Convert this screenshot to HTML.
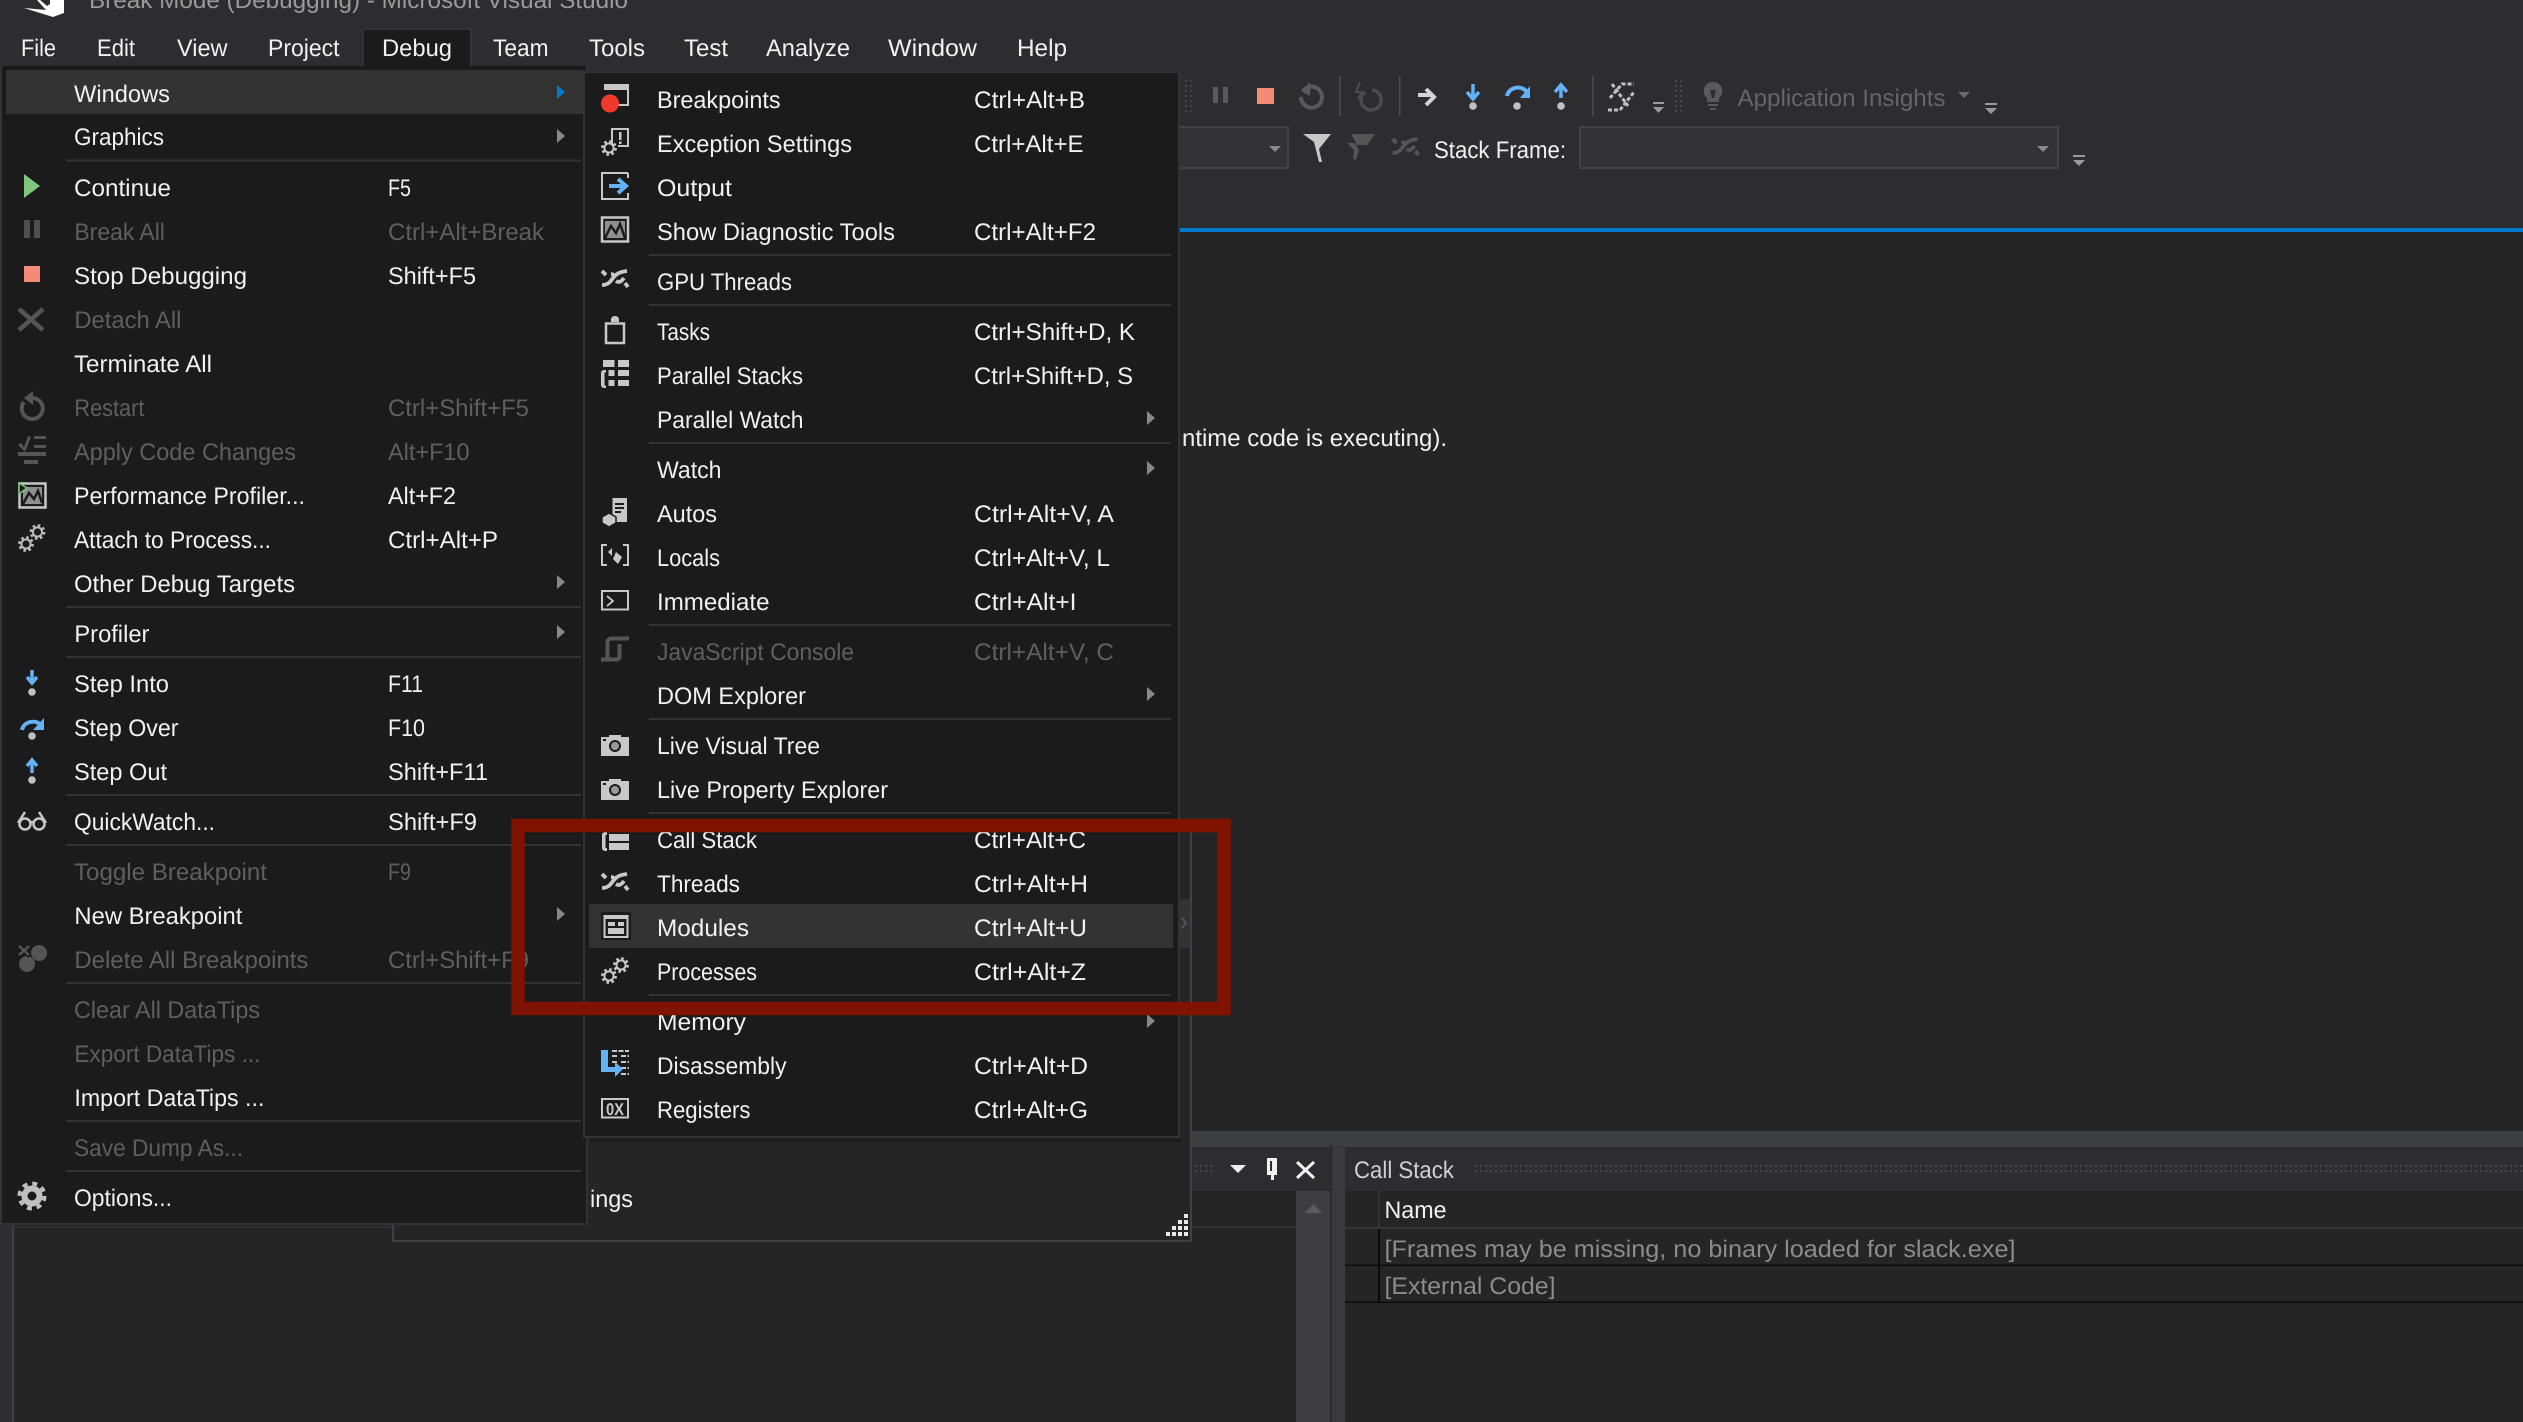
<!DOCTYPE html>
<html lang="en"><head><meta charset="utf-8"><title>Break Mode (Debugging) - Microsoft Visual Studio</title>
<style>
html,body{margin:0;padding:0;background:#252526;overflow:hidden}
svg{display:block}
text{font-family:"Liberation Sans",sans-serif;font-size:24px;fill:#f1f1f1;text-rendering:geometricPrecision}
.d{fill:#5f5f5f}
.g{fill:#8c8c8c}
</style></head><body>
<svg xmlns="http://www.w3.org/2000/svg" width="2523" height="1422" viewBox="0 0 2523 1422">
<defs>
<pattern id="grip" width="5" height="5" patternUnits="userSpaceOnUse"><rect width="2" height="2" fill="#48484c"/></pattern>
<symbol id="threads" viewBox="0 0 28 17" overflow="visible"><g fill="none" stroke-linecap="butt" stroke-width="3.800">
<path d="M1 15 C7 15 9 12 12 8 S18 2 26 1"/><path d="M10 4 C12 4 13 5 14 6 M15 11 C18 13 20 12 23 8 M1 1 l4 4 M24 13 l3 4"/></g></symbol>
<symbol id="gear" viewBox="-9 -9 18 18" overflow="visible"><g fill="none"><circle r="4.6" stroke-width="2"/><circle r="6.6" stroke-width="2.6" stroke-dasharray="2.6 2.58"/></g></symbol>
<symbol id="stepdot" viewBox="0 0 8 8"><circle cx="4" cy="4" r="3.8" fill="#c0c0c0"/></symbol>
</defs>

<!-- chrome -->
<rect width="2523" height="1422" fill="#252526"/>
<rect width="2523" height="228" fill="#2d2d30"/>
<rect x="0" y="228" width="2523" height="4" fill="#007acc"/>
<rect x="0" y="232" width="12" height="1190" fill="#2d2d30"/>
<rect x="12" y="232" width="2" height="1190" fill="#3f3f46"/>

<!-- logo + title -->
<path d="M24 8 L53 17 L64 13 L64 0 L50 0 L50 4 L47 6 L40 0 L37 0 L46 10 Z" fill="#fff"/>
<text x="89" y="8" textLength="539" lengthAdjust="spacingAndGlyphs" style="fill:#9a9a9a">Break Mode (Debugging) - Microsoft Visual Studio</text>

<!-- menu bar -->
<rect x="363" y="29" width="108" height="41" fill="#1b1b1c"/>
<path d="M363 70V29H471V66" fill="none" stroke="#333337" stroke-width="2"/>
<g>
<text x="21" y="56" textLength="35" lengthAdjust="spacingAndGlyphs">File</text>
<text x="97" y="56" textLength="38" lengthAdjust="spacingAndGlyphs">Edit</text>
<text x="177" y="56" textLength="50.5" lengthAdjust="spacingAndGlyphs">View</text>
<text x="268" y="56" textLength="71.5" lengthAdjust="spacingAndGlyphs">Project</text>
<text x="382" y="56" textLength="70" lengthAdjust="spacingAndGlyphs">Debug</text>
<text x="493" y="56" textLength="55.5" lengthAdjust="spacingAndGlyphs">Team</text>
<text x="589" y="56" textLength="56" lengthAdjust="spacingAndGlyphs">Tools</text>
<text x="684" y="56" textLength="44" lengthAdjust="spacingAndGlyphs">Test</text>
<text x="766" y="56" textLength="84" lengthAdjust="spacingAndGlyphs">Analyze</text>
<text x="888" y="56" textLength="89" lengthAdjust="spacingAndGlyphs">Window</text>
<text x="1017" y="56" textLength="50" lengthAdjust="spacingAndGlyphs">Help</text>
</g>

<!-- toolbar row 1 -->
<rect x="1184" y="78" width="10" height="34" fill="url(#grip)"/>
<path d="M1213 87h5v16h-5zM1223 87h5v16h-5z" fill="#5a5a5a"/>
<rect x="1257" y="88" width="17" height="16" fill="#f38b76"/>
<g fill="none" stroke="#5a5a5a" stroke-width="4"><path d="M1303 91 A10.5 10.5 0 1 1 1301 97"/></g>
<path d="M1310 82 L1301 91 L1310 96Z" fill="#5a5a5a"/>
<rect x="1339" y="76" width="1.5" height="40" fill="#4a4a4f"/>
<g fill="none" stroke="#4c4c4c" stroke-width="3.5"><path d="M1372 90 A10 10 0 1 1 1365 92"/><path d="M1360 82 L1356 92 H1362 L1358 99" stroke-width="2"/></g>
<rect x="1399" y="76" width="1.5" height="40" fill="#4a4a4f"/>
<path d="M1418 95h15M1426 89l8 8-8 8" fill="none" stroke="#d4d4d4" stroke-width="4"/>
<path d="M1473 84v12M1467 92l6 7 6-7" fill="none" stroke="#62b2f5" stroke-width="3.5"/>
<use href="#stepdot" x="1469" y="102" width="8" height="8"/>
<path d="M1507 96 A11 10 0 0 1 1527 92" fill="none" stroke="#62b2f5" stroke-width="4"/>
<path d="M1530 86v12h-10z" fill="#62b2f5"/>
<use href="#stepdot" x="1513" y="102" width="8" height="8"/>
<path d="M1561 98V86M1555 92l6-7 6 7" fill="none" stroke="#62b2f5" stroke-width="3.5"/>
<use href="#stepdot" x="1557" y="102" width="8" height="8"/>
<rect x="1592" y="76" width="1.5" height="40" fill="#4a4a4f"/>
<g fill="none" stroke="#c0c0c0" stroke-width="3" stroke-dasharray="4 2"><path d="M1610 98 L1622 84 H1634"/><path d="M1608 110 L1620 110 L1634 92"/><path d="M1612 84 L1628 106"/></g>
<g fill="#9a9a9a"><rect x="1653" y="102" width="11" height="2"/><path d="M1653 107h11l-5.5 6z"/></g>
<rect x="1674" y="78" width="10" height="34" fill="url(#grip)"/>
<g fill="#5a5a5a"><path d="M1713 82a9 9 0 0 0-6 16v4h12v-4a9 9 0 0 0-6-16zm-3 8h6l-2 8h-2z" fill-rule="evenodd"/><rect x="1708" y="104" width="10" height="2"/><rect x="1710" y="108" width="6" height="2"/></g>
<text x="1737.5" y="106" textLength="208" lengthAdjust="spacingAndGlyphs" style="fill:#666">Application Insights</text>
<path d="M1958 92h12l-6 6z" fill="#6a6a6a"/>
<g fill="#9a9a9a"><rect x="1985" y="103" width="12" height="2"/><path d="M1985 108h12l-6 6z"/></g>

<!-- toolbar row 2 -->
<rect x="1178" y="127" width="110" height="41" fill="#333337" stroke="#434346" stroke-width="2"/>
<path d="M1269 146h12l-6 6z" fill="#8a8a8a"/>
<path d="M1303 134h28l-12 15 3 13h-3l-5-20z" fill="#c8c8c8"/>
<path d="M1347 143h8l4 7-3 10-3-1 1-9zM1351 134h24l-8 11h-10z" fill="#555"/>
<use href="#threads" x="1391" y="138" width="29" height="17" stroke="#555"/>
<text x="1434" y="158" textLength="132" lengthAdjust="spacingAndGlyphs">Stack Frame:</text>
<rect x="1580" y="127" width="478" height="41" fill="#333337" stroke="#434346" stroke-width="2"/>
<path d="M2037 146h12l-6 6z" fill="#8a8a8a"/>
<g fill="#9a9a9a"><rect x="2073" y="155" width="12" height="2"/><path d="M2073 160h12l-6 6z"/></g>

<!-- document text -->
<text x="1182" y="446" textLength="265" lengthAdjust="spacingAndGlyphs">ntime code is executing).</text>

<!-- bottom panes -->
<rect x="1191" y="1131" width="1332" height="16" fill="#3e3f43"/>
<rect x="1191" y="1147" width="139" height="44" fill="#2d2d30"/>
<rect x="1194" y="1165" width="18" height="9" fill="url(#grip)"/>
<path d="M1230 1165h16l-8 8z" fill="#eee"/>
<path d="M1267 1158h10v17h-3v5h-3v-5h-4zM1270 1161v10h2v-10z" fill="#f1f1f1" fill-rule="evenodd"/>
<path d="M1297 1162l17 16M1314 1162l-17 16" stroke="#f1f1f1" stroke-width="3"/>
<rect x="1191" y="1226" width="105" height="2" fill="#333337"/>
<rect x="1296" y="1191" width="34" height="231" fill="#3e3e42"/>
<path d="M1305 1213l8.500-9 8.500 9z" fill="#5c5c5f"/>
<rect x="1330" y="1145" width="2" height="277" fill="#2a2a2b"/>
<rect x="1332" y="1145" width="13" height="277" fill="#3a3a3d"/>
<rect x="1345" y="1147" width="1178" height="44" fill="#2d2d30"/>
<rect x="1472" y="1165" width="1051" height="9" fill="url(#grip)"/>
<text x="1354" y="1178" textLength="100" lengthAdjust="spacingAndGlyphs" style="fill:#d0d0d0">Call Stack</text>
<rect x="1345" y="1191" width="1178" height="231" fill="#252526"/>
<rect x="1378" y="1191" width="2" height="36" fill="#333337"/>
<rect x="1345" y="1227" width="1178" height="1.500" fill="#3a3a3d"/>
<rect x="1378" y="1229" width="2" height="73" fill="#0a0a0a"/>
<rect x="1345" y="1264.500" width="1178" height="1.500" fill="#0a0a0a"/>
<rect x="1345" y="1301.500" width="1178" height="1.500" fill="#0a0a0a"/>
<text x="1384.500" y="1218" textLength="62" lengthAdjust="spacingAndGlyphs">Name</text>
<text x="1384.500" y="1257" textLength="631" lengthAdjust="spacingAndGlyphs" class="g">[Frames may be missing, no binary loaded for slack.exe]</text>
<text x="1384.500" y="1294" textLength="171" lengthAdjust="spacingAndGlyphs" class="g">[External Code]</text>

<!-- popup behind menus -->
<rect x="580" y="1137" width="610" height="103" fill="#252526"/>
<path d="M393 1222V1241H1191" fill="none" stroke="#414145" stroke-width="2"/>
<rect x="1190" y="1136" width="2" height="105" fill="#414145"/>
<rect x="1178" y="840" width="12" height="296" fill="#252526"/>
<rect x="1178" y="899" width="13" height="49" fill="#333337"/>
<path d="M1182 918l4 5-4 5" fill="none" stroke="#555" stroke-width="2"/>
<rect x="1190" y="832" width="2" height="304" fill="#414145"/>
<text x="590" y="1207" textLength="43" lengthAdjust="spacingAndGlyphs">ings</text>
<path d="M1184 1214h4v4h-4zM1184 1220h4v4h-4zM1184 1226h4v4h-4zM1184 1232h4v4h-4zM1178 1220h4v4h-4zM1178 1226h4v4h-4zM1178 1232h4v4h-4zM1172 1226h4v4h-4zM1172 1232h4v4h-4zM1166 1232h4v4h-4z" fill="#e8e8e8"/>

<!-- MAIN DEBUG MENU -->
<rect x="12" y="1226" width="378" height="2" fill="#2f2f31"/>
<rect x="0" y="66" width="588" height="1159" fill="#333337"/>
<rect x="2" y="66" width="584" height="1157" fill="#1b1b1c"/>
<rect x="6" y="70" width="577" height="44" fill="#333334"/>
<g fill="#333337">
<rect x="66" y="159.500" width="515" height="2"/><rect x="66" y="606" width="515" height="2"/><rect x="66" y="656" width="515" height="2"/><rect x="66" y="794" width="515" height="2"/><rect x="66" y="844" width="515" height="2"/><rect x="66" y="982" width="515" height="2"/><rect x="66" y="1120" width="515" height="2"/><rect x="66" y="1170" width="515" height="2"/>
</g>
<g>
<text x="74" y="102" textLength="96" lengthAdjust="spacingAndGlyphs">Windows</text>
<text x="74" y="145" textLength="90" lengthAdjust="spacingAndGlyphs">Graphics</text>
<text x="74" y="196" textLength="97" lengthAdjust="spacingAndGlyphs">Continue</text>
<text x="74.400" y="240" textLength="90.500" lengthAdjust="spacingAndGlyphs" class="d">Break All</text>
<text x="74" y="284" textLength="173" lengthAdjust="spacingAndGlyphs">Stop Debugging</text>
<text x="74.400" y="328" textLength="107" lengthAdjust="spacingAndGlyphs" class="d">Detach All</text>
<text x="74" y="372" textLength="138" lengthAdjust="spacingAndGlyphs">Terminate All</text>
<text x="74.400" y="416" textLength="70" lengthAdjust="spacingAndGlyphs" class="d">Restart</text>
<text x="74" y="460" textLength="222" lengthAdjust="spacingAndGlyphs" class="d">Apply Code Changes</text>
<text x="74" y="504" textLength="231" lengthAdjust="spacingAndGlyphs">Performance Profiler...</text>
<text x="74" y="548" textLength="197" lengthAdjust="spacingAndGlyphs">Attach to Process...</text>
<text x="74" y="592" textLength="221" lengthAdjust="spacingAndGlyphs">Other Debug Targets</text>
<text x="74.400" y="642" textLength="75" lengthAdjust="spacingAndGlyphs">Profiler</text>
<text x="74" y="692" textLength="95" lengthAdjust="spacingAndGlyphs">Step Into</text>
<text x="74" y="736" textLength="104.500" lengthAdjust="spacingAndGlyphs">Step Over</text>
<text x="74" y="780" textLength="93" lengthAdjust="spacingAndGlyphs">Step Out</text>
<text x="74" y="830" textLength="141" lengthAdjust="spacingAndGlyphs">QuickWatch...</text>
<text x="74" y="880" textLength="193" lengthAdjust="spacingAndGlyphs" class="d">Toggle Breakpoint</text>
<text x="74.400" y="924" textLength="168" lengthAdjust="spacingAndGlyphs">New Breakpoint</text>
<text x="74.400" y="968" textLength="234" lengthAdjust="spacingAndGlyphs" class="d">Delete All Breakpoints</text>
<text x="74" y="1018" textLength="186" lengthAdjust="spacingAndGlyphs" class="d">Clear All DataTips</text>
<text x="74.400" y="1062" textLength="186" lengthAdjust="spacingAndGlyphs" class="d">Export DataTips ...</text>
<text x="74.400" y="1106" textLength="190" lengthAdjust="spacingAndGlyphs">Import DataTips ...</text>
<text x="74" y="1156" textLength="169" lengthAdjust="spacingAndGlyphs" class="d">Save Dump As...</text>
<text x="74" y="1206" textLength="98" lengthAdjust="spacingAndGlyphs">Options...</text>
<!-- shortcuts -->
<text x="388" y="196" textLength="23" lengthAdjust="spacingAndGlyphs">F5</text>
<text x="388" y="240" textLength="156" lengthAdjust="spacingAndGlyphs" class="d">Ctrl+Alt+Break</text>
<text x="388" y="284" textLength="88" lengthAdjust="spacingAndGlyphs">Shift+F5</text>
<text x="388" y="416" textLength="141" lengthAdjust="spacingAndGlyphs" class="d">Ctrl+Shift+F5</text>
<text x="388" y="460" textLength="81.500" lengthAdjust="spacingAndGlyphs" class="d">Alt+F10</text>
<text x="388" y="504" textLength="68" lengthAdjust="spacingAndGlyphs">Alt+F2</text>
<text x="388" y="548" textLength="110" lengthAdjust="spacingAndGlyphs">Ctrl+Alt+P</text>
<text x="388" y="692" textLength="35" lengthAdjust="spacingAndGlyphs">F11</text>
<text x="388" y="736" textLength="37" lengthAdjust="spacingAndGlyphs">F10</text>
<text x="388" y="780" textLength="100" lengthAdjust="spacingAndGlyphs">Shift+F11</text>
<text x="388" y="830" textLength="89" lengthAdjust="spacingAndGlyphs">Shift+F9</text>
<text x="388" y="880" textLength="23" lengthAdjust="spacingAndGlyphs" class="d">F9</text>
<text x="388" y="968" textLength="141" lengthAdjust="spacingAndGlyphs" class="d">Ctrl+Shift+F9</text>
</g>
<!-- arrows main -->
<path d="M557 85l8 7-8 7z" fill="#007acc"/>
<g fill="#888"><path d="M557 129l8 7-8 7zM557 575l8 7-8 7zM557 625l8 7-8 7zM557 907l8 7-8 7z"/></g>
<!-- icons main -->
<path d="M24 174l16 12-16 12z" fill="#7fc77f"/>
<path d="M24 220h6v18h-6zM34 220h6v18h-6z" fill="#4f4f4f"/>
<rect x="24" y="266" width="16" height="16" fill="#f38b76"/>
<path d="M19 309l24 21M43 309l-24 21" stroke="#555" stroke-width="4.500"/>
<path d="M33 398A10.500 10.500 0 1 1 24 402" fill="none" stroke="#555" stroke-width="4"/>
<path d="M33 391v14l-9-7z" fill="#555"/>
<g fill="#555"><rect x="34" y="436" width="12" height="3"/><rect x="34" y="445" width="12" height="3"/><rect x="18" y="452" width="28" height="4"/><rect x="24" y="460" width="14" height="4"/><path d="M18 445l3-2 3 4 4-11 3 1-6 15z"/></g>
<g><rect x="19.500" y="483.500" width="26" height="24" fill="#1b1b1c" stroke="#c8c8c8" stroke-width="2.500"/><rect x="23" y="487" width="19" height="17" fill="#8f8f8f"/><path d="M23 504l6-11 5 6 4-8 4 12" fill="none" stroke="#1b1b1c" stroke-width="2.500"/><path d="M19 483l8 5-8 6z" fill="#1b1b1c" stroke="#7fc77f" stroke-width="1.500"/></g>
<use href="#gear" x="28.500" y="523" width="18" height="18" stroke="#bcbcbc"/>
<use href="#gear" x="17" y="535" width="18" height="18" stroke="#bcbcbc"/>
<path d="M32 670v10M27 677l5 6 5-6" fill="none" stroke="#62b2f5" stroke-width="3.500"/>
<use href="#stepdot" x="28" y="688" width="8" height="8"/>
<path d="M22 730A11 10 0 0 1 41 725" fill="none" stroke="#62b2f5" stroke-width="4"/>
<path d="M44 718v12h-11z" fill="#62b2f5"/>
<use href="#stepdot" x="28" y="732" width="8" height="8"/>
<path d="M32 773v-10M27 766l5-6 5 6" fill="none" stroke="#62b2f5" stroke-width="3.500"/>
<use href="#stepdot" x="28" y="776" width="8" height="8"/>
<g fill="none" stroke="#c8c8c8" stroke-width="2.500"><circle cx="25" cy="824" r="5.500"/><circle cx="39" cy="824" r="5.500"/><path d="M18 823l7-11M46 823l-7-11M30 822h4"/></g>
<g fill="#555"><circle cx="39" cy="953" r="8"/><circle cx="27" cy="964" r="8"/></g>
<path d="M18 945l12 11M30 945l-12 11" stroke="#1b1b1c" stroke-width="5"/><path d="M19 946l10 9M29 946l-10 9" stroke="#555" stroke-width="2.500"/>
<g fill="none" stroke="#c0c0c0"><circle cx="32" cy="1196" r="7.500" stroke-width="6"/><circle cx="32" cy="1196" r="12.500" stroke-width="4" stroke-dasharray="4.900 4.900"/></g>

<!-- SUBMENU WINDOWS -->
<rect x="590" y="1137" width="592" height="5" fill="#131314" opacity=".5"/>
<rect x="584" y="72" width="595" height="1065" fill="#1b1b1c" stroke="#333337" stroke-width="2"/>
<rect x="589" y="904" width="584" height="44" fill="#333334"/>
<g fill="#333337">
<rect x="649" y="254" width="522" height="2"/><rect x="649" y="304" width="522" height="2"/><rect x="649" y="442" width="522" height="2"/><rect x="649" y="624" width="522" height="2"/><rect x="649" y="718" width="522" height="2"/><rect x="649" y="812" width="522" height="2"/><rect x="649" y="994" width="522" height="2"/>
</g>
<g>
<text x="657" y="108" textLength="123.600" lengthAdjust="spacingAndGlyphs">Breakpoints</text>
<text x="657" y="152" textLength="195" lengthAdjust="spacingAndGlyphs">Exception Settings</text>
<text x="657" y="196" textLength="75" lengthAdjust="spacingAndGlyphs">Output</text>
<text x="657" y="240" textLength="238" lengthAdjust="spacingAndGlyphs">Show Diagnostic Tools</text>
<text x="657" y="290" textLength="135" lengthAdjust="spacingAndGlyphs">GPU Threads</text>
<text x="657" y="340" textLength="53" lengthAdjust="spacingAndGlyphs">Tasks</text>
<text x="657" y="384" textLength="146" lengthAdjust="spacingAndGlyphs">Parallel Stacks</text>
<text x="657" y="428" textLength="146.500" lengthAdjust="spacingAndGlyphs">Parallel Watch</text>
<text x="657" y="478" textLength="64.500" lengthAdjust="spacingAndGlyphs">Watch</text>
<text x="657" y="522" textLength="60" lengthAdjust="spacingAndGlyphs">Autos</text>
<text x="657" y="566" textLength="63" lengthAdjust="spacingAndGlyphs">Locals</text>
<text x="657" y="610" textLength="112.500" lengthAdjust="spacingAndGlyphs">Immediate</text>
<text x="657" y="660" textLength="197" lengthAdjust="spacingAndGlyphs" class="d">JavaScript Console</text>
<text x="657" y="704" textLength="149" lengthAdjust="spacingAndGlyphs">DOM Explorer</text>
<text x="657" y="754" textLength="163" lengthAdjust="spacingAndGlyphs">Live Visual Tree</text>
<text x="657" y="798" textLength="231" lengthAdjust="spacingAndGlyphs">Live Property Explorer</text>
<text x="657" y="848" textLength="100" lengthAdjust="spacingAndGlyphs">Call Stack</text>
<text x="657" y="892" textLength="83" lengthAdjust="spacingAndGlyphs">Threads</text>
<text x="657" y="936" textLength="92" lengthAdjust="spacingAndGlyphs">Modules</text>
<text x="657" y="980" textLength="100" lengthAdjust="spacingAndGlyphs">Processes</text>
<text x="657" y="1030" textLength="89" lengthAdjust="spacingAndGlyphs">Memory</text>
<text x="657" y="1074" textLength="129.500" lengthAdjust="spacingAndGlyphs">Disassembly</text>
<text x="657" y="1118" textLength="93.500" lengthAdjust="spacingAndGlyphs">Registers</text>
<text x="974" y="108" textLength="111" lengthAdjust="spacingAndGlyphs">Ctrl+Alt+B</text>
<text x="974" y="152" textLength="109.500" lengthAdjust="spacingAndGlyphs">Ctrl+Alt+E</text>
<text x="974" y="240" textLength="122" lengthAdjust="spacingAndGlyphs">Ctrl+Alt+F2</text>
<text x="974" y="340" textLength="161" lengthAdjust="spacingAndGlyphs">Ctrl+Shift+D, K</text>
<text x="974" y="384" textLength="159" lengthAdjust="spacingAndGlyphs">Ctrl+Shift+D, S</text>
<text x="974" y="522" textLength="140" lengthAdjust="spacingAndGlyphs">Ctrl+Alt+V, A</text>
<text x="974" y="566" textLength="136" lengthAdjust="spacingAndGlyphs">Ctrl+Alt+V, L</text>
<text x="974" y="610" textLength="102.500" lengthAdjust="spacingAndGlyphs">Ctrl+Alt+I</text>
<text x="974" y="660" textLength="140" lengthAdjust="spacingAndGlyphs" class="d">Ctrl+Alt+V, C</text>
<text x="974" y="848" textLength="112" lengthAdjust="spacingAndGlyphs">Ctrl+Alt+C</text>
<text x="974" y="892" textLength="114" lengthAdjust="spacingAndGlyphs">Ctrl+Alt+H</text>
<text x="974" y="936" textLength="113" lengthAdjust="spacingAndGlyphs">Ctrl+Alt+U</text>
<text x="974" y="980" textLength="112" lengthAdjust="spacingAndGlyphs">Ctrl+Alt+Z</text>
<text x="974" y="1074" textLength="114" lengthAdjust="spacingAndGlyphs">Ctrl+Alt+D</text>
<text x="974" y="1118" textLength="114" lengthAdjust="spacingAndGlyphs">Ctrl+Alt+G</text>
</g>
<g fill="#888"><path d="M1147 411l8 7-8 7zM1147 461l8 7-8 7zM1147 687l8 7-8 7zM1147 1014l8 7-8 7z"/></g>
<!-- submenu icons -->
<path d="M605 90V85H628V105H618" fill="none" stroke="#c8c8c8" stroke-width="2"/><rect x="605" y="85" width="23" height="5" fill="#c8c8c8"/>
<circle cx="610" cy="103.500" r="9" fill="#f1392c"/>
<path d="M612 144V129H628V146H618" fill="none" stroke="#c8c8c8" stroke-width="2"/><rect x="619" y="132" width="2.500" height="8" fill="#c8c8c8"/><rect x="619" y="141.500" width="2.500" height="2.500" fill="#c8c8c8"/>
<use href="#gear" x="600" y="139" width="18" height="18" stroke="#c8c8c8"/>
<path d="M628 173H602V199H628V193M628 173V178" fill="none" stroke="#c8c8c8" stroke-width="2"/>
<path d="M609 186h15M618 179l8 7-8 7" fill="none" stroke="#62b2f5" stroke-width="4" />
<g><rect x="602" y="217.500" width="26" height="24" fill="#1b1b1c" stroke="#c8c8c8" stroke-width="2.500"/><rect x="605" y="221" width="20" height="17" fill="#8f8f8f"/><path d="M605 238l6-12 5 7 4-9 5 14" fill="none" stroke="#1b1b1c" stroke-width="2.500"/></g>
<use href="#threads" x="601" y="270" width="28" height="17" stroke="#c8c8c8"/>
<path d="M606 323.500H624V343H606Z" fill="none" stroke="#c8c8c8" stroke-width="2.500"/><path d="M611 322v-3a4 3 0 0 1 8 0v3z" fill="#c8c8c8"/>
<g fill="#c8c8c8"><rect x="603" y="360" width="11.500" height="7"/><rect x="618" y="360" width="11" height="7"/><rect x="608.500" y="370" width="6" height="6"/><rect x="618" y="370" width="11" height="6"/><rect x="608.500" y="380" width="6" height="6"/><rect x="618" y="380" width="11" height="6"/><path d="M606 370h-2a3 3 0 0 0-3 3v12a3 3 0 0 0 3 3h2v-2.500h-1.500v-13h1.500z"/></g>
<g><rect x="612.500" y="498" width="14.500" height="24" fill="#c8c8c8"/><path d="M615 504h9M615 508h9M615 512h6" stroke="#1b1b1c" stroke-width="2"/><path d="M609 513l7 4v6l-7 4-7-4v-6z" fill="#c8c8c8" stroke="#1b1b1c" stroke-width="1.500"/></g>
<path d="M607 545H602V565H607M623 545H628V565H623" fill="none" stroke="#c8c8c8" stroke-width="2"/><path d="M612 548l-4 4 4 4zM616 552l6 5-4 7-5-5z" fill="#c8c8c8"/>
<rect x="602" y="591" width="26" height="18.500" fill="none" stroke="#c8c8c8" stroke-width="2"/><path d="M607 596l6 5-6 5" fill="none" stroke="#c8c8c8" stroke-width="1.800"/>
<path d="M629 638.500H612A4 4 0 0 0 607.500 643V658M601 659.500H617A2.500 2.500 0 0 0 619.500 657V644" fill="none" stroke="#555" stroke-width="4"/>
<g><rect x="601" y="737" width="28" height="19" fill="#c8c8c8"/><rect x="609" y="735" width="12" height="3" fill="#c8c8c8"/><rect x="603" y="739" width="3" height="2" fill="#1b1b1c"/><circle cx="615" cy="746" r="5" fill="#999" stroke="#1b1b1c" stroke-width="2"/></g>
<g><rect x="601" y="781" width="28" height="19" fill="#c8c8c8"/><rect x="609" y="779" width="12" height="3" fill="#c8c8c8"/><rect x="603" y="783" width="3" height="2" fill="#1b1b1c"/><circle cx="615" cy="790" r="5" fill="#999" stroke="#1b1b1c" stroke-width="2"/></g>
<g fill="#c8c8c8"><rect x="609" y="834" width="20" height="7"/><rect x="609" y="843" width="20" height="7"/><path d="M607 832h-2a3 3 0 0 0-3 3v13a3 3 0 0 0 3 3h2v-3h-1.500v-13h1.500z"/></g>
<use href="#threads" x="601" y="873" width="28" height="17" stroke="#c8c8c8"/>
<rect x="601" y="912" width="30" height="28" fill="#1b1b1c"/><rect x="604.500" y="916" width="23" height="21" fill="none" stroke="#c8c8c8" stroke-width="2"/><rect x="605" y="916" width="22" height="3" fill="#c8c8c8"/>
<path d="M608 922h7v4h-7zM618 922h6v4h-6zM608 928h16v6h-16z" fill="#c8c8c8"/>
<use href="#gear" x="612" y="956" width="18" height="18" stroke="#c8c8c8"/>
<use href="#gear" x="600" y="967" width="18" height="18" stroke="#c8c8c8"/>
<g><path d="M612 1051h17M612 1056h6M621 1056h8M612 1062h6M621 1062h8M621 1068h8M621 1074h8" stroke="#c8c8c8" stroke-width="2" stroke-dasharray="5 1.500" fill="none"/><path d="M601 1050h7v17h7v-5l8 7-8 8v-5h-14z" fill="#62b2f5"/></g>
<rect x="602" y="1099" width="26" height="18.500" fill="none" stroke="#c8c8c8" stroke-width="2"/><text x="606" y="1115" textLength="18" lengthAdjust="spacingAndGlyphs" style="font-size:17px;font-weight:bold;fill:#c8c8c8">0X</text>

<!-- red annotation -->
<rect x="518" y="825.500" width="706" height="183" fill="none" stroke="#801300" stroke-width="13.500"/>
</svg>
</body></html>
